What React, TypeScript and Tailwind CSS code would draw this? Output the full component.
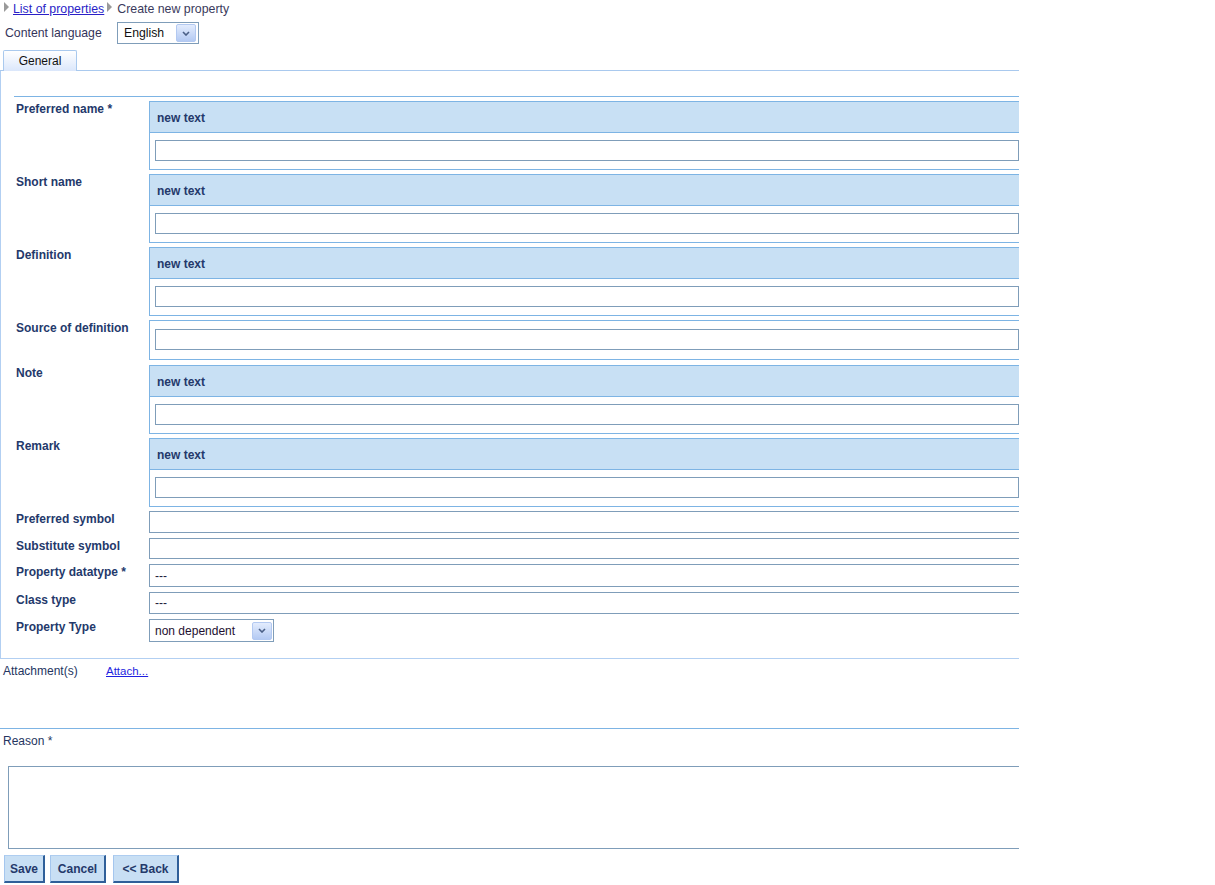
import React from "react";

const LABEL = "text-[#24396b] font-bold";

function Chevron() {
  return (
    <svg width="8" height="5" viewBox="0 0 8 5">
      <polyline points="1,1 4,4 7,1" fill="none" stroke="#4a5f86" strokeWidth="1.6" />
    </svg>
  );
}

function ArrowBtn() {
  return (
    <div className="w-[20px] h-[18px] border border-[#b3c9f1] rounded-[2px] bg-gradient-to-b from-[#e3ecfd] to-[#b4caf3] flex items-center justify-center">
      <Chevron />
    </div>
  );
}

function MultiBox() {
  return (
    <div className="w-[880px] shrink-0 border border-[#7db4e4]">
      <div className={"h-[31px] bg-[#c8e0f4] border-b border-[#7db4e4] flex items-center pl-[7px] pt-[2px] " + LABEL}>new text</div>
      <div className="pt-[7px] pb-[8px] pl-[5px]">
        <div className="w-[864px] h-[21px] border border-[#7f9db9] bg-white" />
      </div>
    </div>
  );
}

function Row({ label, children, mb }: { label: string; children: React.ReactNode; mb: string }) {
  return (
    <div className={"flex " + mb}>
      <div className={"w-[133px] shrink-0 pt-[1px] " + LABEL}>{label}</div>
      {children}
    </div>
  );
}

function Plain({ h, text }: { h: string; text?: string }) {
  return (
    <div className={"w-[880px] shrink-0 border border-[#7f9db9] flex items-center pl-[5px] text-[#1d1d3a] " + h}>{text}</div>
  );
}

function Btn({ w, children }: { w: string; children: React.ReactNode }) {
  return (
    <div
      className={
        "h-[28px] flex items-center justify-center bg-[#c8dff4] border-t border-l border-t-[#aecdf0] border-l-[#a4c6ee] border-r-2 border-b-2 border-r-[#2f5f99] border-b-[#2f5f99] text-[#24396b] font-bold " +
        w
      }
    >
      {children}
    </div>
  );
}

export default function App() {
  return (
    <div className="w-[1019px] overflow-hidden bg-white font-['Liberation_Sans',Arial,sans-serif] text-[12px] leading-[14px]">
      {/* breadcrumb */}
      <div className="h-[22px] flex items-start pt-[2px] pl-[4px] text-[12.35px]">
        <div className="mt-[0px] w-0 h-0 border-y-[5px] border-l-[5px] border-y-transparent border-l-[#9a9a9a]" />
        <a href="#" className="ml-[4px] text-[#2a1fc7] underline">List of properties</a>
        <div className="mt-[0px] ml-[3px] w-0 h-0 border-y-[5px] border-l-[5px] border-y-transparent border-l-[#9a9a9a]" />
        <span className="ml-[5px] text-[#3a3a5c]">Create new property</span>
      </div>
      {/* content language */}
      <div className="h-[22px] flex items-center pl-[5px] text-[12.25px]">
        <div className="w-[112px] text-[#34345a]">Content language</div>
        <div className="w-[82px] h-[22px] border border-[#7f9db9] flex items-center pl-[6px] pr-[2px]">
          <span className="text-[#111]">English</span>
          <div className="ml-auto">
            <ArrowBtn />
          </div>
        </div>
      </div>
      {/* tabs */}
      <div className="mt-[6px] flex">
        <div className="w-[3px] h-[21px] border-b border-[#a9c9ee]" />
        <div className="w-[74px] h-[21px] border-t border-l border-r border-[#a9c9ee] rounded-t-[2px] bg-gradient-to-b from-white to-[#dbe7fb] flex items-center justify-center text-[#111]">
          General
        </div>
        <div className="flex-1 h-[21px] border-b border-[#a9c9ee]" />
      </div>
      {/* panel */}
      <div className="border-l border-b border-[#b2cff2] pt-[25px] pl-[13px] pb-[16px]">
        <div className="border-t border-[#7db4e4]" />
        <div className="pl-[2px] pt-[4px]">
          <Row label="Preferred name *" mb="mb-[4px]"><MultiBox /></Row>
          <Row label="Short name" mb="mb-[4px]"><MultiBox /></Row>
          <Row label="Definition" mb="mb-[4px]"><MultiBox /></Row>
          <Row label="Source of definition" mb="mb-[5px]">
            <div className="w-[880px] shrink-0 border border-[#7db4e4] pt-[8px] pb-[9px] pl-[5px]">
              <div className="w-[864px] h-[21px] border border-[#7f9db9]" />
            </div>
          </Row>
          <Row label="Note" mb="mb-[4px]"><MultiBox /></Row>
          <Row label="Remark" mb="mb-[4px]"><MultiBox /></Row>
          <Row label="Preferred symbol" mb="mb-[5px]"><Plain h="h-[22px]" /></Row>
          <Row label="Substitute symbol" mb="mb-[5px]"><Plain h="h-[21px]" /></Row>
          <Row label="Property datatype *" mb="mb-[5px]"><Plain h="h-[23px]" text="---" /></Row>
          <Row label="Class type" mb="mb-[5px]"><Plain h="h-[22px]" text="---" /></Row>
          <Row label="Property Type" mb="">
            <div className="w-[125px] h-[23px] border border-[#7f9db9] flex items-center pl-[5px] pr-[1px]">
              <span className="text-[#1e0f30]">non dependent</span>
              <div className="ml-auto">
                <ArrowBtn />
              </div>
            </div>
          </Row>
        </div>
      </div>
      {/* attachments */}
      <div className="mt-[5px] h-[14px] flex items-center pl-[3px]">
        <div className="w-[103px] text-[#25355f]">Attachment(s)</div>
        <a href="#" className="text-[11.5px] text-[#1f1fe0] underline">Attach...</a>
      </div>
      <div className="mt-[50px] border-t border-[#7db4e4]" />
      <div className="mt-[5px] pl-[3px] text-[#25355f]">Reason *</div>
      <div className="mt-[18px] ml-[8px] w-[1020px] h-[83px] border border-[#7f9db9]" />
      <div className="mt-[6px] ml-[4px] flex">
        <Btn w="w-[41px]">Save</Btn>
        <div className="w-[5px]" />
        <Btn w="w-[56px]">Cancel</Btn>
        <div className="w-[7px]" />
        <Btn w="w-[66px]">&lt;&lt; Back</Btn>
      </div>
    </div>
  );
}
